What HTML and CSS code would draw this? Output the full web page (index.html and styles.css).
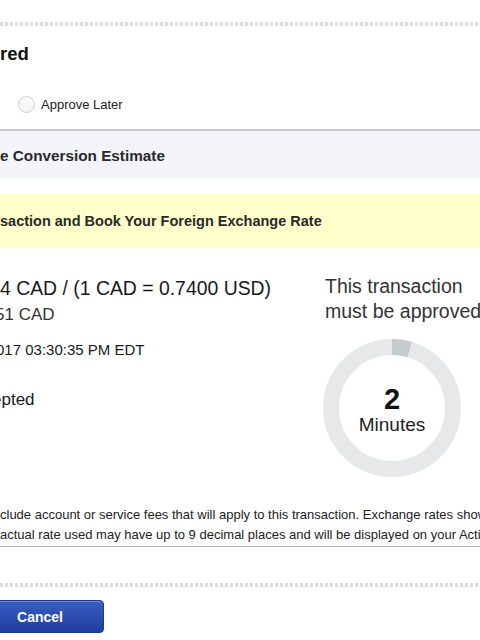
FILE: index.html
```html
<!DOCTYPE html>
<html>
<head>
<meta charset="utf-8">
<link rel="stylesheet" href="styles.css">
</head>
<body>
<div class="page">
  <div class="dots"></div>
  <h2 class="heading">red</h2>
  <div class="radio-row">
    <span class="radio"></span>
    <span class="radio-label">Approve Later</span>
  </div>
  <div class="section-band">e Conversion Estimate</div>
  <div class="notice-band">saction and Book Your Foreign Exchange Rate</div>
  <div class="main">
    <div class="left-col">
      <div class="rate">4 CAD / (1 CAD = 0.7400 USD)</div>
      <div class="amount">51 CAD</div>
      <div class="date">017 03:30:35 PM EDT</div>
      <div class="status">epted</div>
    </div>
    <div class="right-col">
      <div class="approve-text">This transaction<br>must be approved</div>
      <div class="donut">
        <svg class="donut-svg" width="140" height="140" viewBox="0 0 140 140">
          <circle cx="70" cy="70" r="61" fill="none" stroke="#e6e8e9" stroke-width="16"/>
          <circle cx="70" cy="70" r="61" fill="none" stroke="#c4cbcc" stroke-width="16" stroke-dasharray="18 400" transform="rotate(-90 70 70)"/>
        </svg>
        <div class="donut-label">
          <div class="donut-num">2</div>
          <div class="donut-unit">Minutes</div>
        </div>
      </div>
    </div>
  </div>
  <div class="disclaimer">
    <div class="disc-line">clude account or service fees that will apply to this transaction. Exchange rates shown are estimates</div>
    <div class="disc-line">actual rate used may have up to 9 decimal places and will be displayed on your Activity</div>
  </div>
  <div class="dots dots-bottom"></div>
  <div class="actions">
    <button class="btn-cancel">Cancel</button>
  </div>
</div>
</body>
</html>
```

FILE: styles.css
```css
html, body {
  margin: 0;
  padding: 0;
  width: 480px;
  height: 640px;
  overflow: hidden;
  background: #fff;
}
body {
  font-family: "Liberation Sans", Arial, sans-serif;
  color: #222;
}
.page {
  padding-top: 22px;
  white-space: nowrap;
}
.dots {
  height: 4px;
  background: repeating-linear-gradient(90deg, #dcdcdc 0 3px, transparent 3px 5px);
}
.heading {
  margin: 18px 0 0 0;
  font-size: 18.5px;
  line-height: 20px;
  font-weight: bold;
  color: #111;
}
.radio-row {
  margin-top: 30px;
  height: 20px;
  display: flex;
  align-items: center;
}
.radio {
  box-sizing: border-box;
  width: 17px;
  height: 17px;
  margin-left: 18px;
  border-radius: 50%;
  border: 1px solid #d2d2d2;
  background: linear-gradient(#fdfdfd, #f2f2f2);
  box-shadow: inset 0 1px 1px rgba(0,0,0,0.04);
}
.radio-label {
  margin-left: 6px;
  font-size: 13px;
  color: #222;
}
.section-band {
  margin-top: 15px;
  border-top: 2px solid #cacaca;
  background: #f3f4f9;
  height: 48px;
  line-height: 50px;
  font-size: 15.3px;
  font-weight: bold;
  color: #2a2a2a;
}
.notice-band {
  margin-top: 15px;
  background: #ffffcc;
  height: 54px;
  line-height: 55px;
  font-size: 14.5px;
  font-weight: bold;
  color: #2a2a2a;
}
.main {
  display: flex;
  align-items: flex-start;
}
.left-col {
  width: 325px;
  flex: none;
  padding-top: 28px;
}
.rate {
  font-size: 19.4px;
  line-height: 24px;
  color: #1a1a1a;
}
.amount {
  margin-top: 3px;
  margin-left: -5px;
  font-size: 17px;
  line-height: 24px;
  color: #333;
}
.date {
  margin-top: 13px;
  margin-left: -4px;
  font-size: 15px;
  line-height: 20px;
  color: #1a1a1a;
}
.status {
  margin-top: 28px;
  margin-left: -8px;
  font-size: 17px;
  line-height: 24px;
  color: #1a1a1a;
}
.right-col {
  flex: none;
  padding-top: 26px;
}
.approve-text {
  font-size: 19.5px;
  line-height: 25px;
  color: #333;
}
.donut {
  margin-top: 14px;
  margin-left: -3px;
  width: 140px;
  height: 140px;
  display: grid;
}
.donut-svg, .donut-label {
  grid-area: 1 / 1;
}
.donut-label {
  display: flex;
  flex-direction: column;
  align-items: center;
  justify-content: center;
  padding-top: 4px;
}
.donut-num {
  font-size: 29px;
  line-height: 30px;
  font-weight: bold;
  color: #111;
}
.donut-unit {
  font-size: 19px;
  line-height: 22px;
  color: #222;
}
.disclaimer {
  margin-top: 27px;
  padding-bottom: 1px;
  border-bottom: 1px solid #b3b3b3;
}
.disc-line {
  font-size: 13px;
  line-height: 20px;
  color: #222;
}
.dots-bottom {
  margin-top: 36px;
}
.actions {
  margin-top: 13px;
}
.btn-cancel {
  display: block;
  box-sizing: border-box;
  margin-left: -24px;
  width: 128px;
  height: 33px;
  padding: 0;
  border: 1px solid #1b3a94;
  border-radius: 4px;
  background: linear-gradient(#3b5ec2, #1e3d9e);
  box-shadow: inset 0 1px 0 rgba(255,255,255,0.25);
  color: #fff;
  font-family: "Liberation Sans", Arial, sans-serif;
  font-size: 14px;
  font-weight: bold;
  text-align: center;
}
```
